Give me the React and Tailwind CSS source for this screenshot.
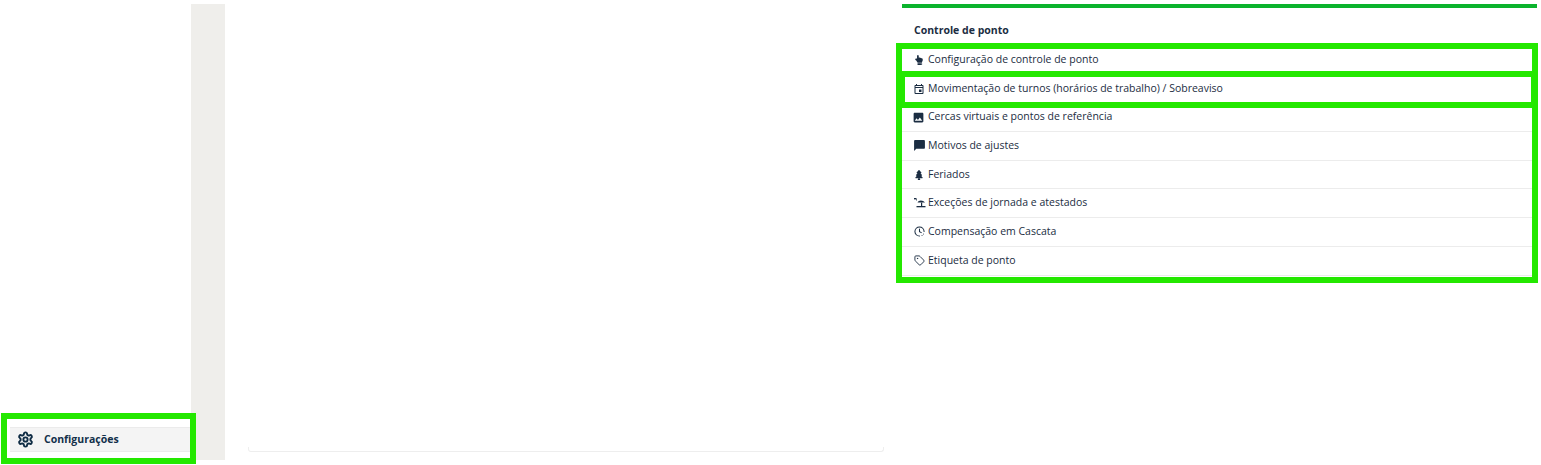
import React from "react";
import { FaHandPointUp, FaTree } from "react-icons/fa";
import { MdOutlineEvent, MdInsertPhoto, MdChatBubble } from "react-icons/md";
import { LuSettings, LuTag } from "react-icons/lu";

function BeachIcon({ className }) {
  return (
    <svg viewBox="0 0 12 12" width="12" height="12" className={className} fill="currentColor">
      <rect x="0" y="1" width="2.5" height="1.4" />
      <rect x="2" y="2.4" width="1" height="1" />
      <path d="M3.5 5.6 C4.5 2.8 9 2.8 11 5.6 Z" />
      <rect x="7" y="5.6" width="1.2" height="3.4" />
      <rect x="2.5" y="9" width="9" height="1.3" />
    </svg>
  );
}

function ClockIcon({ className }) {
  return (
    <svg viewBox="0 0 24 24" width="11" height="11" className={className} fill="none" stroke="currentColor" strokeWidth="2.2" strokeLinecap="round">
      <path d="M22 12a10 10 0 1 0-10 10" />
      <path d="M12 6.5v6l4 2" />
      <path d="M17.5 20.5l.01 0M20.5 17.5l.01 0" />
    </svg>
  );
}

const rows = [
  [FaHandPointUp, "Configuração de controle de ponto", "text-[10px]"],
  [MdOutlineEvent, "Movimentação de turnos (horários de trabalho) / Sobreaviso", "text-[12px] -ml-px"],
  [MdInsertPhoto, "Cercas virtuais e pontos de referência", "text-[13px] -ml-[2px]"],
  [MdChatBubble, "Motivos de ajustes", "text-[13px] -ml-[1px]"],
  [FaTree, "Feriados", "text-[10px]"],
  [BeachIcon, "Exceções de jornada e atestados", ""],
  [ClockIcon, "Compensação em Cascata", ""],
  [LuTag, "Etiqueta de ponto", "text-[11px]"],
];

function Mark({ className }) {
  return <div className={"absolute border-[#24e800] " + className} />;
}

export default function App() {
  return (
    <div className="relative flex h-[465px] w-[1541px] overflow-hidden bg-white pt-1 font-['Open_Sans',sans-serif] text-[#1b2d42]">
      <aside className="flex h-[456px] w-[191px] shrink-0 flex-col justify-end pb-[8px] pl-[10px]">
        <div className="flex h-[25px] items-center border-y border-[#ebebeb] bg-[#f4f4f4] pl-[7px]">
          <LuSettings className="text-[17px] text-[#0f2c44]" strokeWidth={2.7} />
          <span className="ml-[10px] text-[10.5px] font-bold text-[#12304a]">Configurações</span>
        </div>
      </aside>
      <div className="h-[456px] w-[34px] shrink-0 bg-[#efeeeb]" />
      <main className="ml-[23px] flex h-[448px] w-[636px] shrink-0 flex-col justify-end">
        <div className="h-[5px] rounded-b-[3px] border-x border-b border-[#eeeeee]" />
      </main>
      <section className="ml-[18px] w-[635px] shrink-0">
        <div className="h-1 bg-[#0bb32d]" />
        <h2 className="flex h-[38px] items-center pl-[12px] pt-[7px] text-[10.5px] font-bold">Controle de ponto</h2>
        <ul>
          {rows.map(([Icon, label, size]) => (
            <li key={label} className="flex h-[28.7px] items-center border-b border-[#ececec] pl-[12px] text-[10.5px]">
              <span className="flex w-[14px] shrink-0 items-center">
                <Icon className={size} />
              </span>
              <span>{label}</span>
            </li>
          ))}
        </ul>
      </section>
      <Mark className="left-[1px] top-[413px] h-[51px] w-[195px] border-[6px]" />
      <Mark className="left-[896px] top-[43px] h-[34px] w-[642px] border-[6px]" />
      <Mark className="left-[896px] top-[71px] h-[37px] w-[642px] border-y-[6px] border-l-[9px] border-r-[7px]" />
      <Mark className="left-[896px] top-[102px] h-[181px] w-[642px] border-[6px]" />
    </div>
  );
}
